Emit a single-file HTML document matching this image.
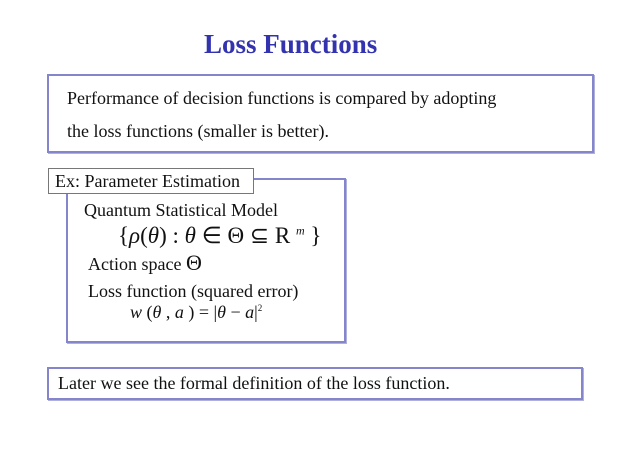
<!DOCTYPE html>
<html><head><style>
body{margin:0;width:638px;height:452px;background:#fff;position:relative;font-family:"Liberation Serif",serif;color:#111;overflow:hidden}
.a{position:absolute;white-space:nowrap}
.box{position:absolute;border:2px solid #8585cc;box-shadow:1px 1px 0 #b0b0dd;box-sizing:border-box}
</style></head><body>
<div class="a" style="left:204px;top:29px;font-size:27px;font-weight:bold;color:#3333b0">Loss Functions</div>
<div class="box" style="left:47px;top:74px;width:547px;height:79px"></div>
<div class="a" style="left:67px;top:88px;font-size:18px">Performance of decision functions is compared by adopting</div>
<div class="a" style="left:67px;top:121px;font-size:18px">the loss functions (smaller is better).</div>
<div class="box" style="left:66px;top:178px;width:280px;height:165px"></div>
<div class="a" style="left:48px;top:168px;width:206px;height:26px;border:1px solid #777;background:#fff;box-sizing:border-box;font-size:18px;padding:2px 0 0 6px">Ex: Parameter Estimation</div>
<div class="a" style="left:84px;top:200px;font-size:18px">Quantum Statistical Model</div>
<div class="a" style="left:118px;top:223px;font-size:23px">{<i>ρ</i>(<i>θ</i>) : <i>θ</i> ∈ Θ ⊆ R <sup style="font-size:12px;font-style:italic">m</sup> }</div>
<div class="a" style="left:88px;top:250px;font-size:18px">Action space <span style="font-size:22px">Θ</span></div>
<div class="a" style="left:88px;top:281px;font-size:18px">Loss function (squared error)</div>
<div class="a" style="left:130px;top:302px;font-size:18px"><i>w</i> (<i>θ</i> , <i>a</i> ) = |<i>θ</i> − <i>a</i>|<sup style="font-size:9px">2</sup></div>
<div class="box" style="left:47px;top:367px;width:536px;height:33px"></div>
<div class="a" style="left:58px;top:373px;font-size:18px">Later we see the formal definition of the loss function.</div>
</body></html>
